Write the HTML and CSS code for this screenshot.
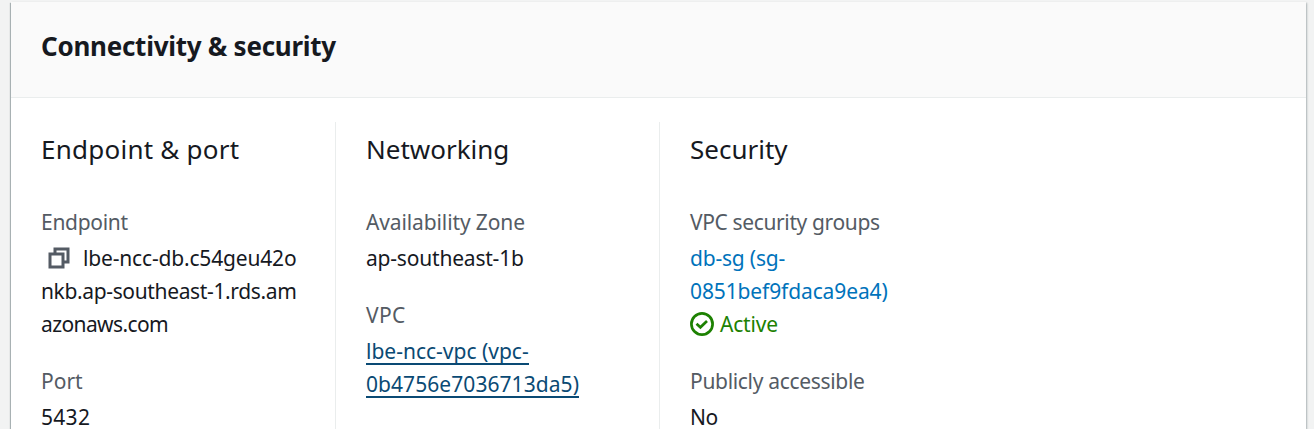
FILE: index.html
```html
<!DOCTYPE html>
<html lang="en">
<head>
<meta charset="utf-8">
<title>Connectivity &amp; security</title>
<link rel="stylesheet" href="styles.css">
</head>
<body>
<section class="panel">
  <header class="panel-header"><h2 class="panel-title">Connectivity &amp; security</h2></header>
  <div class="columns">
    <div class="column">
      <h3 class="column-title t-endpoint">Endpoint &amp; port</h3>
      <dl class="field">
        <dt class="label l-endpoint">Endpoint</dt>
        <dd class="value">
          <span class="line copy-line"><svg class="copy-icon" viewBox="0 0 22 22" fill="none" stroke="currentColor" stroke-width="3"><path d="M7 7V2h13v13h-5"/><path d="M2 7h13v13H2z"/></svg><span class="v-host1">lbe-ncc-db.c54geu42o</span></span>
          <span class="line v-host2">nkb.ap-southeast-1.rds.am</span>
          <span class="line v-host3">azonaws.com</span>
        </dd>
      </dl>
      <dl class="field">
        <dt class="label l-port">Port</dt>
        <dd class="value"><span class="line v-port">5432</span></dd>
      </dl>
    </div>
    <div class="column">
      <h3 class="column-title t-network">Networking</h3>
      <dl class="field">
        <dt class="label l-zone">Availability Zone</dt>
        <dd class="value"><span class="line v-zone">ap-southeast-1b</span></dd>
      </dl>
      <dl class="field">
        <dt class="label l-vpc">VPC</dt>
        <dd class="value"><a class="link hovered"><span class="line"><span class="under v-vpc1">lbe-ncc-vpc (vpc-</span></span><span class="line"><span class="under v-vpc2">0b4756e7036713da5)</span></span></a></dd>
      </dl>
    </div>
    <div class="column">
      <h3 class="column-title t-security">Security</h3>
      <dl class="field">
        <dt class="label l-groups">VPC security groups</dt>
        <dd class="value">
          <a class="link"><span class="line v-sg1">db-sg (sg-</span><span class="line v-sg2">0851bef9fdaca9ea4)</span></a>
          <span class="line status"><svg class="status-icon" viewBox="0 0 24 24" fill="none" stroke="currentColor" stroke-width="2.7"><circle cx="12" cy="12" r="10.6"/><path d="M6.5 11.7l3.9 3.6 6.6-6.3"/></svg><span class="v-active">Active</span></span>
        </dd>
      </dl>
      <dl class="field">
        <dt class="label l-public">Publicly accessible</dt>
        <dd class="value"><span class="line v-no">No</span></dd>
      </dl>
    </div>
  </div>
</section>
</body>
</html>
```
FILE: styles.css
```css
* { box-sizing: border-box; }
html { height: 100%; overflow: hidden; }
body {
  height: 429px;
  margin: 0;
  padding: 2px 8px 0 11px;
  overflow: hidden;
  background: #f2f3f3;
  color: #16191f;
  font: 21px/33px "Noto Sans", sans-serif;
}
h2, h3, dl, dd { margin: 0; }
.panel {
  display: flex;
  flex-direction: column;
  height: 427px;
  background: #fff;
  box-shadow: 0 1px 1px 0 rgba(0, 28, 36, .3), 1px 1px 2px 0 rgba(0, 28, 36, .25), -1px 1px 1px 0 rgba(0, 28, 36, .25);
}
.panel-header {
  flex: none;
  height: 96px;
  padding: 27px 30px 0;
  background: #fafafa;
  border-bottom: 1px solid #eaeded;
}
.panel-title { font-size: 26px; line-height: 34px; font-weight: 700; letter-spacing: -.26px; white-space: nowrap; }
.columns { flex: 1; display: grid; grid-template-columns: 325px 324px 1fr; padding-top: 24px; }
.column { min-width: 0; padding: 9px 30px 0; border-right: 1px solid #eaeded; white-space: nowrap; }
.column:last-child { border-right: 0; }
.column-title { margin-bottom: 39px; font-size: 26px; line-height: 36px; font-weight: 400; }
.field { margin-bottom: 24px; }
.field:last-child { margin-bottom: 0; }
.label { margin-bottom: 3px; color: #545b64; }
.line { display: block; height: 33px; }
.field:last-child .line:last-child { height: 28px; }
.copy-line, .status { display: flex; align-items: center; }
.copy-icon { width: 22px; height: 22px; margin: 0 13px 2px 7px; color: #545b64; flex: none; }
.status-icon { width: 24px; height: 24px; margin: 0 6px 1px 0; flex: none; }
.status { color: #1d8102; }
.link { color: #0073bb; }
.hovered { color: #0a4a74; }
.under { display: inline-block; height: 30px; border-bottom: 2px solid currentColor; }

/* Tracking */
.t-endpoint { letter-spacing: .24px; }
.l-endpoint { letter-spacing: -.3px; }
.v-host1 { letter-spacing: -.17px; }
.v-host2 { letter-spacing: -.36px; }
.v-host3 { letter-spacing: -.6px; }
.v-port { letter-spacing: .3px; }
.l-zone { letter-spacing: -.12px; }
.v-zone { letter-spacing: -.2px; }
.l-vpc { letter-spacing: .3px; }
.v-vpc2 { letter-spacing: .06px; }
.l-groups { letter-spacing: -.37px; }
.v-sg1 { letter-spacing: -.2px; }
.v-sg2 { letter-spacing: -.12px; }
.v-active { letter-spacing: -.2px; }
.l-public { letter-spacing: -.32px; }
.v-no { letter-spacing: -.5px; }
```
